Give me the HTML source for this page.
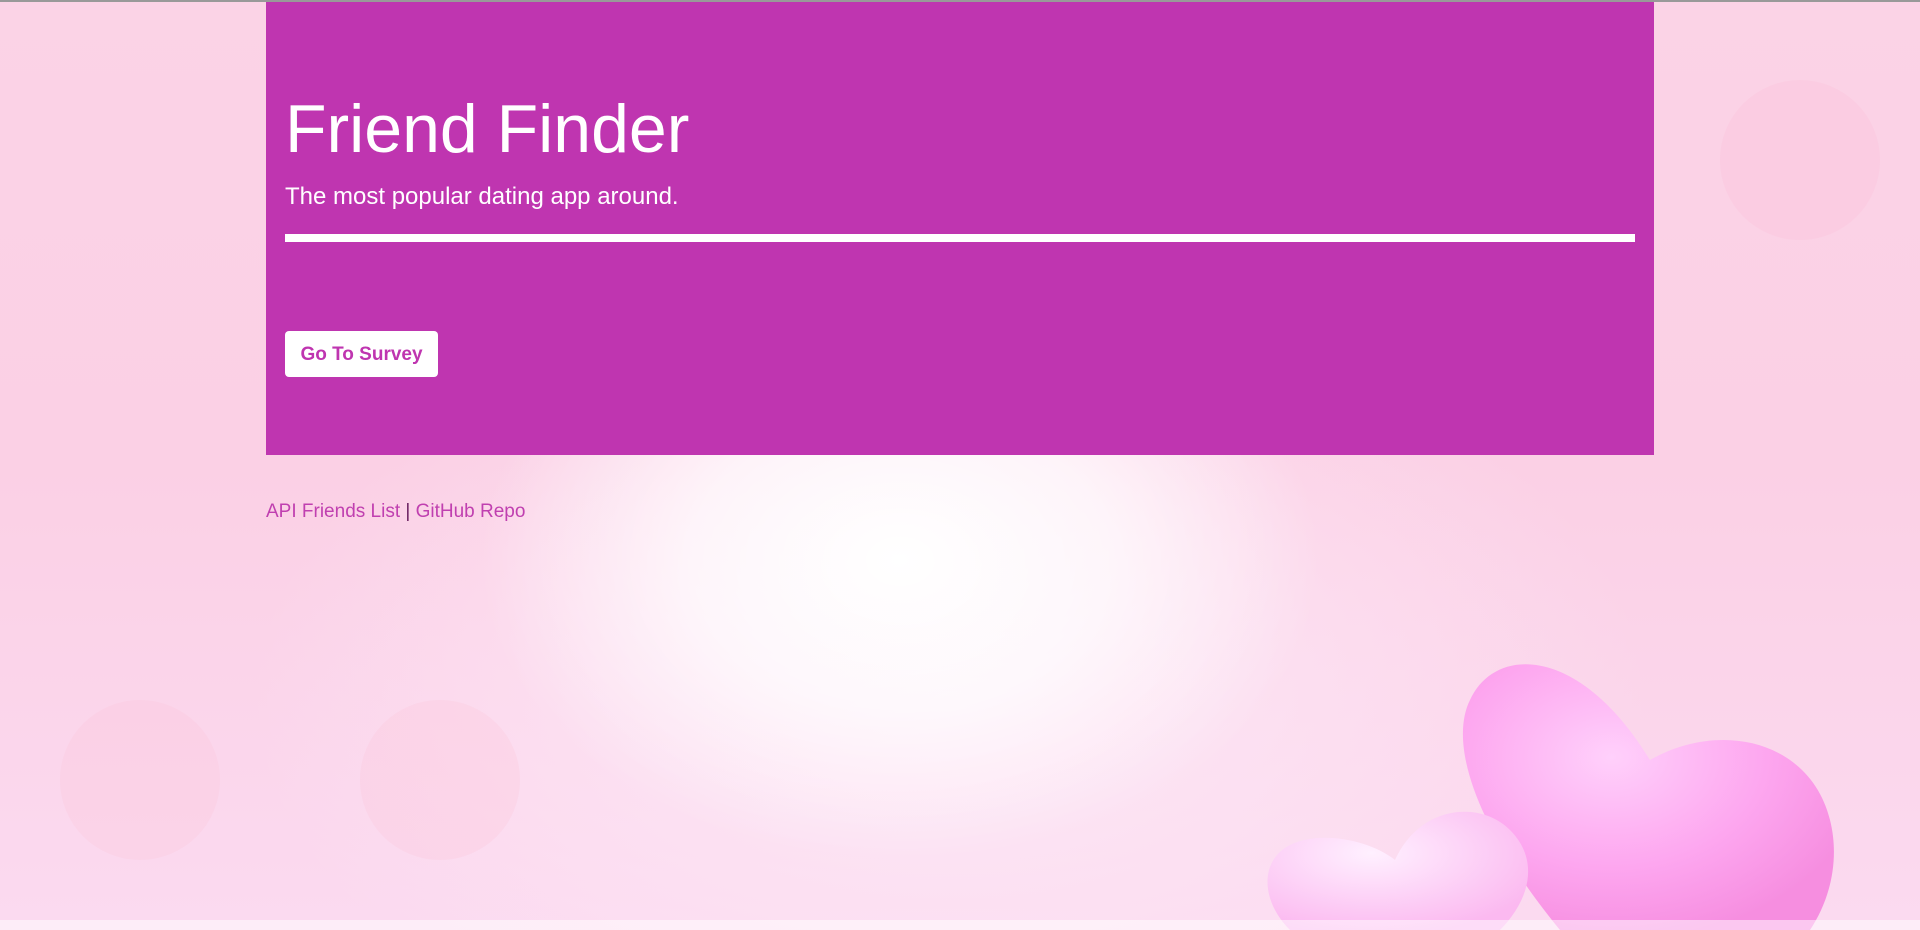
<!DOCTYPE html>
<html><head><meta charset="utf-8"><style>
html,body{margin:0;padding:0;width:1920px;height:930px;overflow:hidden;font-family:"Liberation Sans",sans-serif}
body{position:relative;background:
radial-gradient(ellipse 420px 300px at 900px 560px,#fff 0%,rgba(255,255,255,0.7) 50%,rgba(255,255,255,0) 100%),
radial-gradient(ellipse 700px 400px at 950px 700px,#fde8f6 0%,rgba(253,232,246,0) 100%),
linear-gradient(180deg,#fbd3e6 0%,#fbd0e5 50%,#fbdaf0 100%);}
.heart{position:absolute}
.top{position:absolute;left:0;top:0;width:1920px;height:2px;background:#999}
.jumbo{position:absolute;left:266px;top:2px;width:1388px;height:453px;background:#bf35b0;color:#fff}
h1{position:absolute;left:19px;top:93px;margin:0;font-weight:300;font-size:68px;line-height:1}
.lead{position:absolute;left:19px;top:181px;font-size:24px;font-weight:300}
.hr{position:absolute;left:19px;top:232px;width:1350px;height:8px;background:#fff}
.btn{position:absolute;left:19px;top:329px;width:153px;height:46px;background:#fff;border-radius:4px;color:#bf35b0;font-weight:bold;font-size:19px;line-height:48px;text-align:center}
.links{position:absolute;left:266px;top:501px;font-size:19px;color:#c040b0}
.links span{color:#6a2060}
</style></head><body>
<svg class="heart" style="left:0;top:0" width="1920" height="930">
<defs>
<radialGradient id="g1" cx="40%" cy="35%" r="70%"><stop offset="0" stop-color="#ffd0fb"/><stop offset="0.6" stop-color="#fda6ef"/><stop offset="1" stop-color="#f68ee0"/></radialGradient>
<radialGradient id="g2" cx="40%" cy="35%" r="70%"><stop offset="0" stop-color="#fff0ff"/><stop offset="1" stop-color="#fbb9f0"/></radialGradient>
</defs>
<path d="M1560 930 C1470 820 1450 740 1470 700 C1495 645 1580 645 1650 760 C1720 720 1810 740 1830 820 C1840 860 1830 900 1810 930 Z" fill="url(#g1)"/>
<path d="M1290 930 C1260 900 1260 860 1290 845 C1320 830 1370 840 1395 860 C1420 805 1480 800 1510 830 C1540 860 1530 900 1500 930 Z" fill="url(#g2)"/>
<circle cx="140" cy="780" r="80" fill="#fcc6dc" opacity="0.3"/>
<circle cx="440" cy="780" r="80" fill="#fcc6dc" opacity="0.3"/>
<circle cx="1800" cy="160" r="80" fill="#fcc0dc" opacity="0.3"/>
<rect x="0" y="920" width="1920" height="10" fill="#fff" opacity="0.5"/>
</svg>
<div class="top"></div>
<div class="jumbo">
<h1>Friend Finder</h1>
<div class="lead">The most popular dating app around.</div>
<div class="hr"></div>
<div class="btn">Go To Survey</div>
</div>
<div class="links">API Friends List <span>|</span> GitHub Repo</div>
</body></html>
